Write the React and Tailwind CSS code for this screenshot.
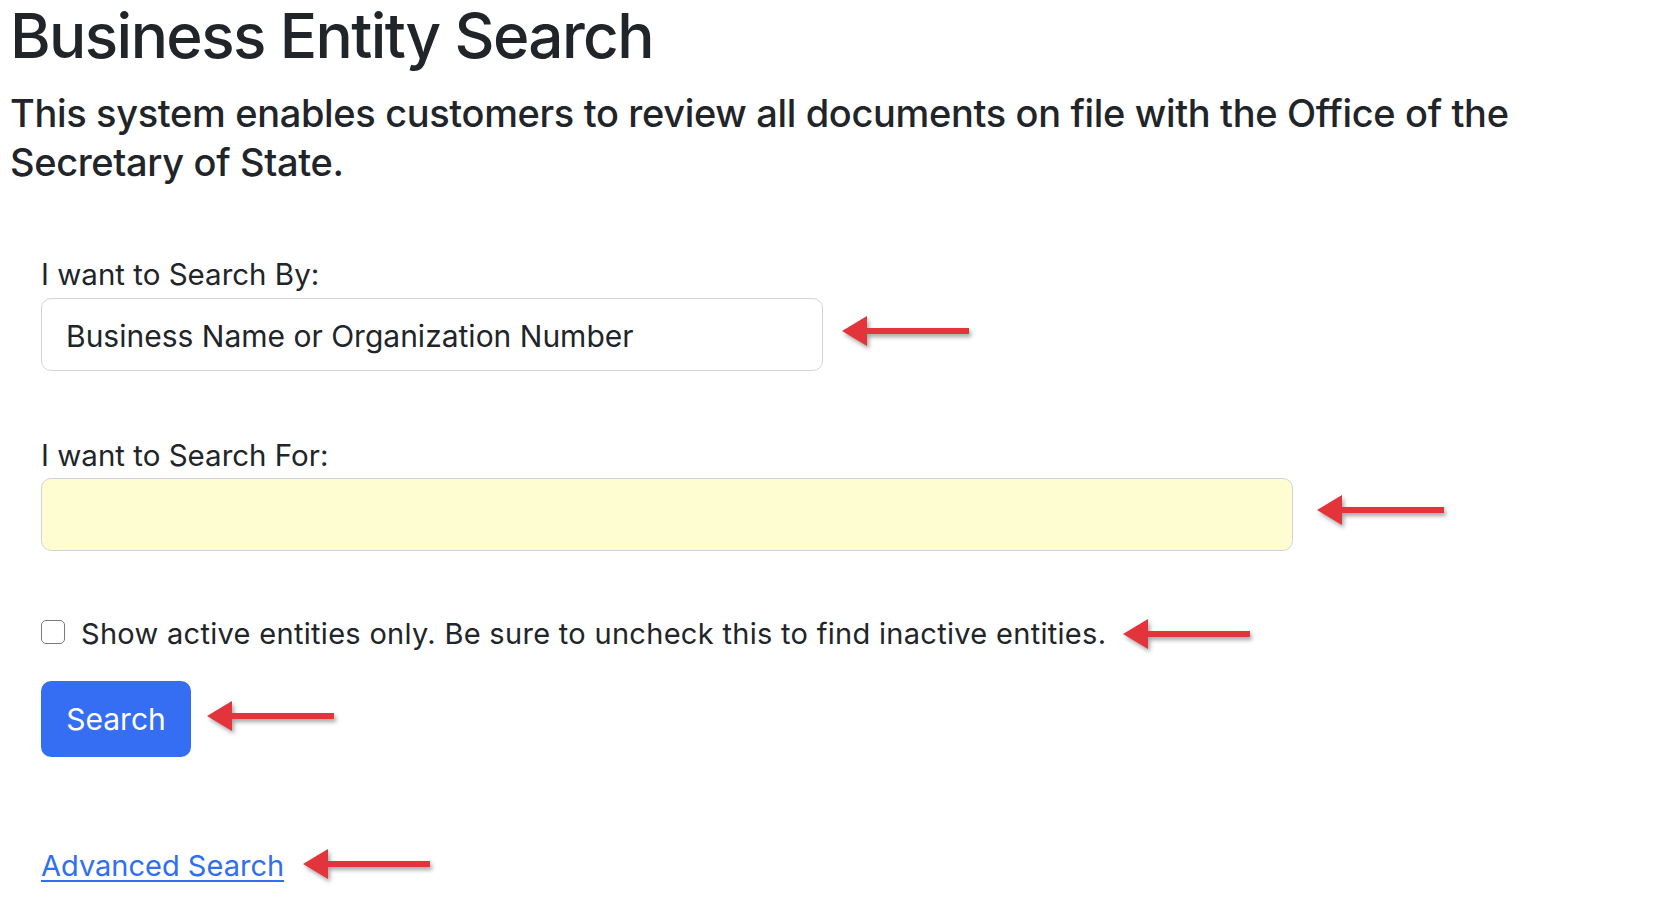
import React from "react";

function Arrow({ className = "" }) {
  return (
    <svg
      width="132"
      height="36"
      viewBox="0 0 132 36"
      className={"shrink-0 drop-shadow-[2px_3px_2px_rgba(0,0,0,0.35)] " + className}
    >
      <polygon points="0,16 25,1 25,31" fill="#e3343c" />
      <rect x="24" y="13" width="103" height="6" fill="#e3343c" />
    </svg>
  );
}

export default function App() {
  return (
    <div
      className="min-h-screen bg-white pl-[10px] text-[#212529]"
      style={{ fontFamily: "Inter, 'Noto Sans', sans-serif" }}
    >
      <h1 className="text-[62px] leading-[72px] font-medium tracking-[-1.6px]">
        Business Entity Search
      </h1>
      <p className="mt-[17px] text-[38px] leading-[49px] font-medium tracking-[-0.35px]">
        This system enables customers to review all documents on file with the Office of the
        <br />
        Secretary of State.
      </p>

      <div className="ml-[31px]">
        <label className="mt-[70px] block text-[29.5px] leading-[35px]">
          I want to Search By:
        </label>
        <div className="mt-[6px] flex items-center">
          <div className="flex h-[73px] w-[782px] items-center rounded-[10px] border border-[#ced4da] pl-[24px] pt-[4px] text-[30px]">
            Business Name or Organization Number
          </div>
          <Arrow className="ml-[19px] mb-[4px]" />
        </div>

        <label className="mt-[67px] block text-[29.5px] leading-[35px]">
          I want to Search For:
        </label>
        <div className="mt-[5px] flex items-center">
          <div className="h-[73px] w-[1252px] rounded-[10px] border border-[#ced4da] bg-[#fefdd2]" />
          <Arrow className="ml-[24px] mb-[5px]" />
        </div>

        <div className="mt-[69px] flex items-start">
          <div className="h-[24px] w-[24px] shrink-0 rounded-[5px] border-[1.5px] border-[#7a7a7a] bg-white" />
          <span className="ml-[16px] pt-[2px] text-[29px] leading-[24px] tracking-[0.3px]">
            Show active entities only. Be sure to uncheck this to find inactive entities.
          </span>
          <Arrow className="ml-[17px] mt-[-2px] mb-[-8px]" />
        </div>

        <div className="mt-[35px] flex items-center">
          <button className="flex h-[76px] w-[150px] items-center justify-center rounded-[10px] bg-[#356ef3] text-[30px] text-white">
            Search
          </button>
          <Arrow className="ml-[16px] mb-[3px]" />
        </div>

        <div className="mt-[91px] flex items-center">
          <a
            href="#"
            className="text-[29px] leading-[36px] text-[#3070f0] underline decoration-[2px] underline-offset-[4px]"
          >
            Advanced Search
          </a>
          <Arrow className="ml-[19px]" />
        </div>
      </div>
    </div>
  );
}
